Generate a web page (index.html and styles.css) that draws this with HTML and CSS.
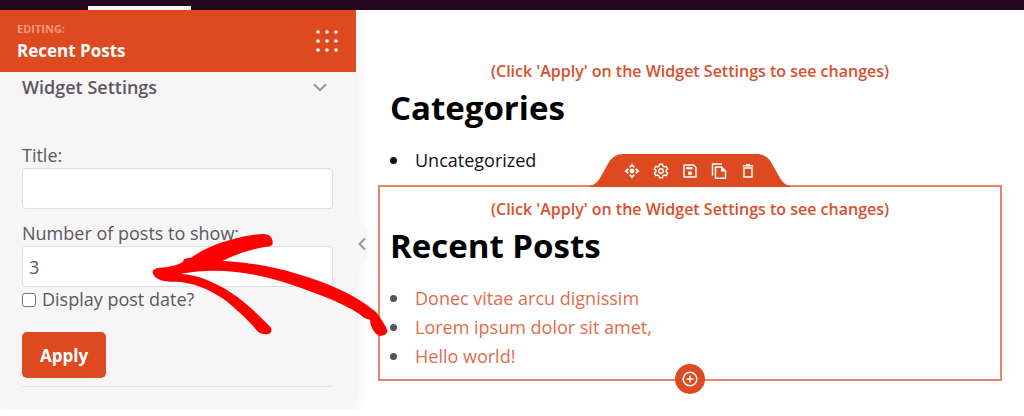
FILE: index.html
```html
<!DOCTYPE html>
<html lang="en">
<head>
<meta charset="utf-8">
<meta name="viewport" content="width=device-width, initial-scale=1">
<title>Recent Posts – Widget Settings</title>
<link rel="stylesheet" href="styles.css">
</head>
<body>
<div class="topbar"><span class="topbar-tab"></span></div>
<div class="workspace">
  <aside class="sidebar">
    <header class="panel-header">
      <div>
        <div class="panel-eyebrow">EDITING:</div>
        <div class="panel-title">Recent Posts</div>
      </div>
      <button class="icon-button" type="button" aria-label="All blocks">
        <svg width="22" height="22" viewBox="0 0 22 22" fill="#fff">
          <circle cx="2" cy="2" r="1.8"/><circle cx="11" cy="2" r="1.8"/><circle cx="20" cy="2" r="1.8"/>
          <circle cx="2" cy="11" r="1.8"/><circle cx="11" cy="11" r="1.8"/><circle cx="20" cy="11" r="1.8"/>
          <circle cx="2" cy="20" r="1.8"/><circle cx="11" cy="20" r="1.8"/><circle cx="20" cy="20" r="1.8"/>
        </svg>
      </button>
    </header>
    <form class="panel-body">
      <button class="section-toggle" type="button" aria-expanded="true">
        <span>Widget Settings</span>
        <svg width="14" height="9" viewBox="0 0 14 9" fill="none" stroke="#9c949c" stroke-width="2"><path d="M1 1.2 7 7.2 13 1.2"/></svg>
      </button>
      <div class="field">
        <label for="widget-title">Title:</label>
        <input class="text-input" id="widget-title" type="text">
      </div>
      <div class="field">
        <label for="post-count">Number of posts to show:</label>
        <input class="text-input" id="post-count" type="text" inputmode="numeric" value="3">
      </div>
      <div class="check-row">
        <input class="check" id="show-date" type="checkbox">
        <label for="show-date">Display post date?</label>
      </div>
      <button class="apply" type="button">Apply</button>
      <hr class="divider">
    </form>
    <button class="collapse" type="button" aria-label="Collapse panel">
      <svg width="14" height="64" viewBox="0 0 14 64">
        <path d="M0 0C1 10 12 12 12 24V40C12 52 1 54 0 64Z" fill="#f6f6f6"/>
        <path d="M9 26.500 3.500 32 9 37.500" fill="none" stroke="#969096" stroke-width="1.800"/>
      </svg>
    </button>
  </aside>
  <main class="canvas">
    <section class="widget">
      <p class="notice">(Click 'Apply' on the Widget Settings to see changes)</p>
      <h2 class="widget-title">Categories</h2>
      <ul class="list list-dark"><li>Uncategorized</li></ul>
    </section>
    <section class="widget widget-selected">
      <div class="toolbar">
        <svg class="toolbar-shape" width="204" height="33" viewBox="0 0 204 33" fill="#dd4a1f"><path d="M2 33V32C6 31 9 29 12 24L21 8C24 3 29 0 35 0H169C175 0 180 3 183 8L192 24C195 29 198 31 202 32V33Z"/></svg>
        <div class="tools">
          <button class="icon-button" type="button" aria-label="Move">
            <svg width="16" height="16" viewBox="0 0 16 16" fill="#fff"><circle cx="8" cy="8" r="2.400"/><path d="M8 .5 11 3.800 9.800 4.800 8 3.500 6.200 4.800 5 3.800ZM8 15.500 5 12.200 6.200 11.200 8 12.500 9.800 11.200 11 12.200ZM.5 8 3.800 5 4.800 6.200 3.500 8 4.800 9.800 3.800 11ZM15.500 8 12.200 11 11.200 9.800 12.500 8 11.200 6.200 12.200 5Z"/></svg>
          </button>
          <button class="icon-button" type="button" aria-label="Settings">
            <svg width="16" height="16" viewBox="0 0 16 16" fill="none" stroke="#fff" stroke-width="1.400" stroke-linejoin="round"><path d="M6.500 1.200H9.500L9.900 3.200 11.200 4 13.200 3.300 14.700 5.900 13.100 7.200V8.800L14.700 10.100 13.200 12.700 11.200 12 9.900 12.800 9.500 14.800H6.500L6.100 12.800 4.800 12 2.800 12.700 1.300 10.100 2.900 8.800V7.200L1.300 5.900 2.800 3.300 4.800 4 6.100 3.200Z"/><circle cx="8" cy="8" r="2.300"/></svg>
          </button>
          <button class="icon-button" type="button" aria-label="Save">
            <svg width="16" height="16" viewBox="0 0 16 16" fill="none" stroke="#fff" stroke-width="1.500"><path d="M2 2H11.500L14 4.500V14H2Z" stroke-linejoin="round"/><path d="M4 5.200H10.500" stroke-width="2.200"/><circle cx="8" cy="10.200" r="2" fill="#fff" stroke="none"/></svg>
          </button>
          <button class="icon-button" type="button" aria-label="Duplicate">
            <svg width="16" height="16" viewBox="0 0 16 16" fill="none" stroke="#fff" stroke-width="1.500" stroke-linejoin="round"><path d="M11 1H1.500V12.500"/><path d="M4.500 4H10.500L14.500 8V15.200H4.500Z"/><path d="M10 4V8.500H14.500Z" fill="#fff" stroke="none"/></svg>
          </button>
          <button class="icon-button" type="button" aria-label="Delete">
            <svg width="16" height="16" viewBox="0 0 16 16" fill="none" stroke="#fff" stroke-width="1.500"><path d="M2.800 2.800H13.200M6 1.800H10"/><path d="M4 5V14H12V5Z"/></svg>
          </button>
        </div>
      </div>
      <p class="notice">(Click 'Apply' on the Widget Settings to see changes)</p>
      <h2 class="widget-title">Recent Posts</h2>
      <ul class="list">
        <li><a href="#">Donec vitae arcu dignissim</a></li>
        <li><a href="#">Lorem ipsum dolor sit amet,</a></li>
        <li><a href="#">Hello world!</a></li>
      </ul>
      <button class="add" type="button" aria-label="Add block">
        <svg width="16" height="16" viewBox="0 0 16 16" fill="none" stroke="#fff" stroke-width="1.500"><circle cx="8" cy="8" r="6.800"/><path d="M8 4.500V11.500M4.500 8H11.500"/></svg>
      </button>
    </section>
  </main>
  <svg class="arrow" width="260" height="120" viewBox="0 0 780 360" fill="#f00" aria-hidden="true">
    <path d="M38 158C37 149 46 144 62 143C90 141 112 136 129 126C129 117 137 113 152 114C185 90 225 72 270 60C305 50 340 43 372 42C389 42 399 54 398 71C395 80 385 79 374 81C328 89 286 103 247 123C330 127 405 141 480 164C570 190 652 228 708 276C724 297 735 314 743 333C738 345 730 348 717 347C701 338 691 320 690 299C677 298 667 290 658 282C600 244 515 214 430 186C340 159 235 140 122 161C185 166 241 194 291 230C326 256 360 289 391 321C398 333 393 342 383 342C369 344 359 340 351 332C321 297 292 270 256 241C210 208 160 187 107 185C74 186 43 179 38 158Z"/>
  </svg>
</div>
</body>
</html>
```

FILE: styles.css
```css
* { box-sizing: border-box; }

body {
  margin: 0;
  background: #fff;
  color: #5f5560;
  font-family: "Open Sans", "Noto Sans", sans-serif;
  font-size: 18px;
  line-height: 25px;
}

button, input { font: inherit; color: inherit; }
button { border: 0; padding: 0; background: none; cursor: pointer; }
svg { display: block; }

.topbar {
  display: flex;
  align-items: flex-end;
  height: 10px;
  padding-left: 88px;
  background: #26071f;
}
.topbar-tab { width: 103px; height: 4px; background: #fff; }

.workspace { position: relative; display: flex; align-items: flex-start; }

.sidebar {
  position: relative;
  flex: 0 0 356px;
  background: #f6f6f6;
  box-shadow: 2px 0 14px rgba(0, 0, 0, 0.07);
}

.panel-header {
  display: flex;
  align-items: center;
  justify-content: space-between;
  padding: 9px 18px 9px 17px;
  background: #dd4a1f;
  color: #fff;
}
.panel-eyebrow { color: #f39a7e; font-size: 11px; font-weight: 700; line-height: 20px; }
.panel-title { font-size: 17px; font-weight: 700; line-height: 24px; }

.panel-body { padding: 0 23px 21px 22px; }
.panel-body label { display: block; }

.section-toggle {
  display: flex;
  align-items: center;
  justify-content: space-between;
  width: 100%;
  height: 30px;
  margin-bottom: 41px;
  padding-right: 6px;
  font-weight: 600;
}

.field { margin-bottom: 12px; }
.text-input {
  display: block;
  width: 100%;
  height: 41px;
  padding: 0 6px;
  border: 1px solid #ddd;
  border-radius: 4px;
  background: #fff;
}
.field + .check-row { margin-top: -12px; }

.check-row { display: flex; align-items: center; gap: 6px; }
.check {
  appearance: none;
  width: 14px;
  height: 14px;
  margin: 0;
  border: 1px solid #777;
  border-radius: 3px;
  background: #fff;
}

.apply {
  height: 46px;
  margin-top: 20px;
  padding: 0 18px;
  border-radius: 5px;
  background: #dd4a1f;
  color: #fff;
  font-size: 17px;
  font-weight: 700;
}

.divider { margin: 8px 0 0; border: 0; border-top: 1px solid #e6e6e6; }

.collapse { position: absolute; top: 202px; left: 100%; }

.canvas { flex: 1; min-width: 0; padding: 37px 22px 29px; }

.widget { position: relative; padding: 10px 10px 8px; border: 2px solid transparent; }
.widget-selected { border-color: #e58468; }

.notice {
  margin: 0 0 2px;
  color: #d9502c;
  font-size: 16px;
  font-weight: 600;
  line-height: 24px;
  text-align: center;
}
.widget-title { margin: 0 0 15px; color: #000; font-size: 33px; line-height: 46px; }

.list { margin: 0; padding: 0; list-style: none; color: #555; line-height: 29px; }
.list li { display: flex; align-items: center; gap: 18px; }
.list li::before { content: ""; width: 7px; height: 7px; border-radius: 50%; background: currentColor; }
.list-dark { color: #111; }
.list a { color: #e06c4d; text-decoration: none; }

.toolbar {
  position: absolute;
  left: 50%;
  bottom: 100%;
  transform: translateX(-50%);
}
.tools {
  position: absolute;
  inset: 0;
  display: flex;
  align-items: center;
  justify-content: center;
  gap: 13px;
}

.add {
  position: absolute;
  left: 50%;
  top: 100%;
  display: grid;
  place-items: center;
  width: 30px;
  height: 30px;
  border-radius: 50%;
  background: #dd4a1f;
  transform: translate(-50%, -50%);
}

.arrow { position: absolute; left: 140px; top: 210px; pointer-events: none; }
```
